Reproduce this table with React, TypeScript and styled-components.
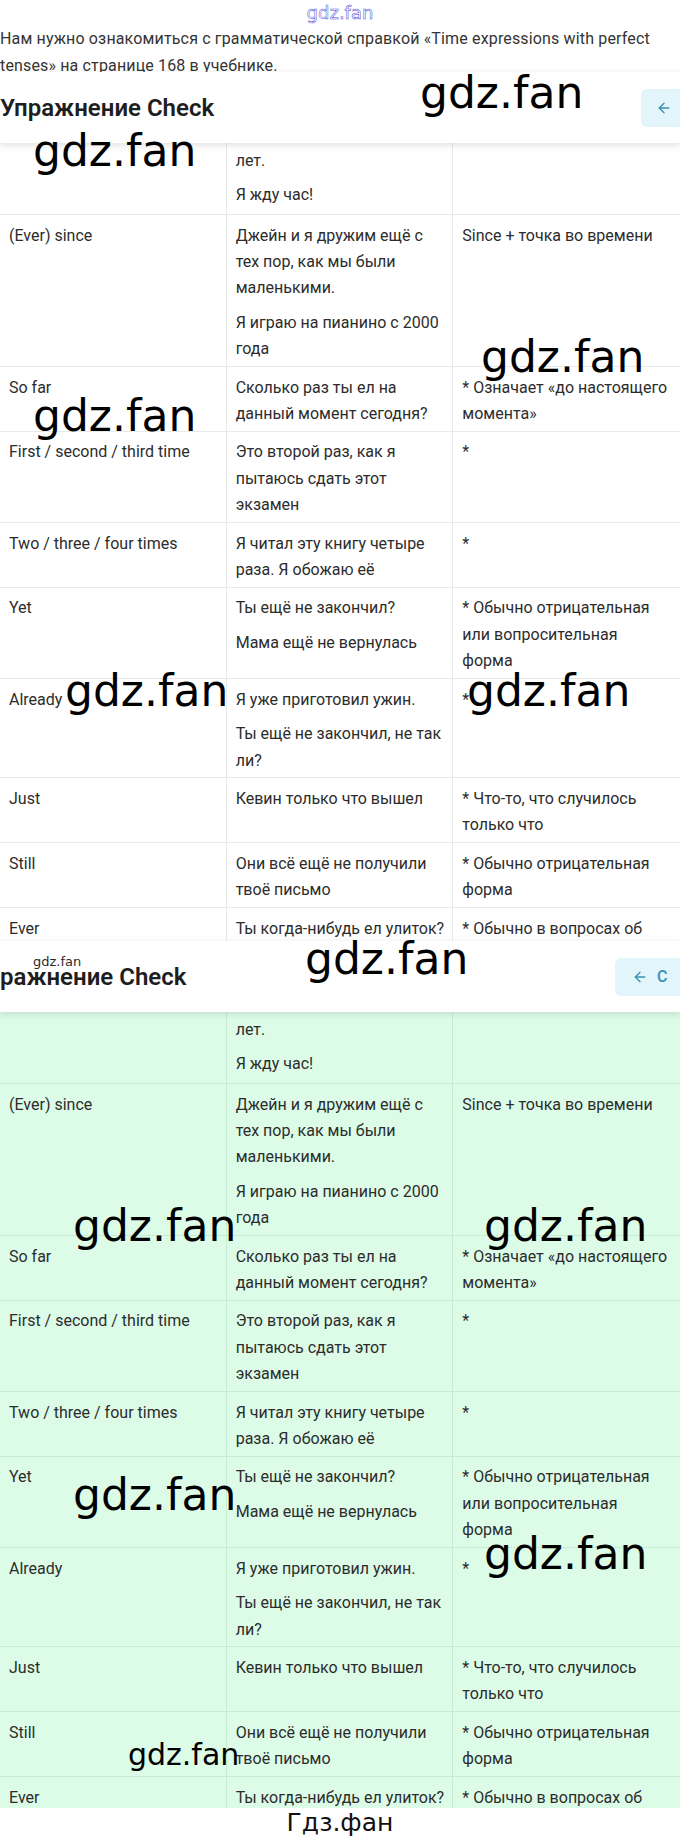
import React from "react";
import styled, { createGlobalStyle } from "styled-components";
import { ArrowLeft } from "lucide-react";

const GlobalStyle = createGlobalStyle`
  html, body { margin: 0; padding: 0; background: #ffffff; }
  body { font-family: Roboto, "Noto Sans", sans-serif; color: #2e2e2e; }
  * { box-sizing: border-box; }
`;

type Tone = "white" | "green";

const palette = {
  white: { bg: "#ffffff", line: "#e9e9e9" },
  green: { bg: "#dcfce8", line: "#c6ecd3" },
};

const Page = styled.div`
  position: relative;
  width: 680px;
  height: 1842px;
  overflow: hidden;
  background: #ffffff;
`;

const TopLink = styled.a`
  display: block;
  height: 25px;
  line-height: 25px;
  text-align: center;
  font-family: "DejaVu Sans", sans-serif;
  font-size: 18px;
  color: transparent;
  -webkit-text-stroke: 0.5px #4a4ad6;
  text-decoration: none;
`;

const Intro = styled.p`
  margin: 0 0 -7px;
  font-size: 16px;
  line-height: 27px;
  letter-spacing: 0.15px;
  color: #343434;
`;

const Header = styled.header`
  position: relative;
  z-index: 2;
  display: flex;
  align-items: center;
  justify-content: space-between;
  height: 71px;
  background: #ffffff;
  box-shadow: 0 2px 7px rgba(0, 0, 0, 0.13);
  overflow: hidden;
`;

const Title = styled.h2`
  margin: 0;
  font-size: 24px;
  font-weight: 600;
  line-height: 1;
  color: #1e1e1e;
  white-space: nowrap;
`;

const BackButton = styled.button<{ $peek: number }>`
  flex-shrink: 0;
  display: flex;
  align-items: center;
  gap: 9px;
  width: 90px;
  height: 38px;
  margin-right: ${(p) => p.$peek - 90}px;
  padding: 0 0 0 ${(p) => (p.$peek > 50 ? 17 : 15)}px;
  border: none;
  border-radius: 6px;
  background: #e2f5fa;
  color: #3a8fb4;
  font-family: Roboto, sans-serif;
  font-size: 16px;
  font-weight: 500;
`;

const Viewport = styled.div<{ $height: number; $tone: Tone }>`
  height: ${(p) => p.$height}px;
  overflow: hidden;
  background: ${(p) => palette[p.$tone].bg};
`;

const Row = styled.div<{ $tone: Tone }>`
  display: grid;
  grid-template-columns: repeat(3, 1fr);
  border-bottom: 1px solid ${(p) => palette[p.$tone].line};
`;

const Cell = styled.div<{ $tone: Tone; $partial?: boolean }>`
  padding: ${(p) => (p.$partial ? "4.8px 8px 5.5px 9px" : "7.5px 8px 3.5px 9px")};
  border-right: 1px solid ${(p) => palette[p.$tone].line};
  font-size: 16px;
  line-height: 26.4px;
  color: #2c2c2c;
  white-space: pre-line;
  &:last-child {
    border-right: none;
  }
`;

const Para = styled.p`
  margin: 0;
  & + & {
    margin-top: 8px;
  }
`;

const Watermark = styled.span<{ $x: number; $y: number; $size: number; $color?: string }>`
  position: absolute;
  left: ${(p) => p.$x}px;
  top: ${(p) => p.$y}px;
  z-index: 5;
  font-family: "DejaVu Sans", sans-serif;
  font-size: ${(p) => p.$size}px;
  line-height: 1;
  color: ${(p) => p.$color ?? "#000000"};
  white-space: nowrap;
  pointer-events: none;
`;

const Footer = styled.div`
  height: 34px;
  text-align: center;
  font-family: "DejaVu Sans", sans-serif;
  font-size: 25px;
  line-height: 30px;
  color: #111111;
`;

type RowData = { c1: string[]; c2: string[]; c3: string[]; partial?: boolean };

const rows: RowData[] = [
  { c1: [], c2: ["лет.", "Я жду час!"], c3: [], partial: true },
  {
    c1: ["(Ever) since"],
    c2: ["Джейн и я дружим ещё с тех пор, как мы были маленькими.", "Я играю на пианино с 2000 года"],
    c3: ["Since + точка во времени"],
  },
  { c1: ["So far"], c2: ["Сколько раз ты ел на данный момент сегодня?"], c3: ["* Означает «до настоящего момента»"] },
  { c1: ["First / second / third time"], c2: ["Это второй раз, как я пытаюсь сдать этот экзамен"], c3: ["*"] },
  { c1: ["Two / three / four times"], c2: ["Я читал эту книгу четыре раза. Я обожаю её"], c3: ["*"] },
  {
    c1: ["Yet"],
    c2: ["Ты ещё не закончил?", "Мама ещё не вернулась"],
    c3: ["* Обычно отрицательная или вопросительная\nформа"],
  },
  { c1: ["Already"], c2: ["Я уже приготовил ужин.", "Ты ещё не закончил, не так ли?"], c3: ["*"] },
  { c1: ["Just"], c2: ["Кевин только что вышел"], c3: ["* Что-то, что случилось только что"] },
  { c1: ["Still"], c2: ["Они всё ещё не получили твоё письмо"], c3: ["* Обычно отрицательная форма"] },
  { c1: ["Ever"], c2: ["Ты когда-нибудь ел улиток?"], c3: ["* Обычно в вопросах об опыте"] },
];

const ExpressionTable: React.FC<{ tone: Tone }> = ({ tone }) => (
  <>
    {rows.map((r, i) => (
      <Row key={i} $tone={tone}>
        {[r.c1, r.c2, r.c3].map((col, j) => (
          <Cell key={j} $tone={tone} $partial={r.partial}>
            {col.map((t, k) => (
              <Para key={k}>{t}</Para>
            ))}
          </Cell>
        ))}
      </Row>
    ))}
  </>
);

const marks: { x: number; y: number; size: number; text?: string; color?: string }[] = [
  { x: 420, y: 71, size: 44 },
  { x: 33, y: 129, size: 44 },
  { x: 481, y: 335, size: 44 },
  { x: 33, y: 394, size: 44 },
  { x: 65, y: 669, size: 44 },
  { x: 467, y: 669, size: 44 },
  { x: 305, y: 937, size: 44 },
  { x: 33, y: 955, size: 13, color: "#2a2a2a" },
  { x: 73, y: 1204, size: 44 },
  { x: 484, y: 1204, size: 44 },
  { x: 73, y: 1473, size: 44 },
  { x: 484, y: 1532, size: 44 },
  { x: 128, y: 1740, size: 30 },
];

export default function App() {
  return (
    <>
      <GlobalStyle />
      <Page>
        <TopLink href="#">gdz.fan</TopLink>
        <Intro>
          Нам нужно ознакомиться с грамматической справкой «Time expressions with perfect tenses» на странице 168 в
          учебнике.
        </Intro>
        <Header>
          <Title>Упражнение Check</Title>
          <BackButton $peek={39}>
            <ArrowLeft size={16} strokeWidth={2} />
            <span>С</span>
          </BackButton>
        </Header>
        <Viewport $height={798} $tone="white">
          <ExpressionTable tone="white" />
        </Viewport>
        <Header>
          <Title>ражнение Check</Title>
          <BackButton $peek={65}>
            <ArrowLeft size={16} strokeWidth={2} />
            <span>С</span>
          </BackButton>
        </Header>
        <Viewport $height={796} $tone="green">
          <ExpressionTable tone="green" />
        </Viewport>
        <Footer>Гдз.фан</Footer>
        {marks.map((m, i) => (
          <Watermark key={i} $x={m.x} $y={m.y} $size={m.size} $color={m.color}>
            {m.text ?? "gdz.fan"}
          </Watermark>
        ))}
      </Page>
    </>
  );
}
